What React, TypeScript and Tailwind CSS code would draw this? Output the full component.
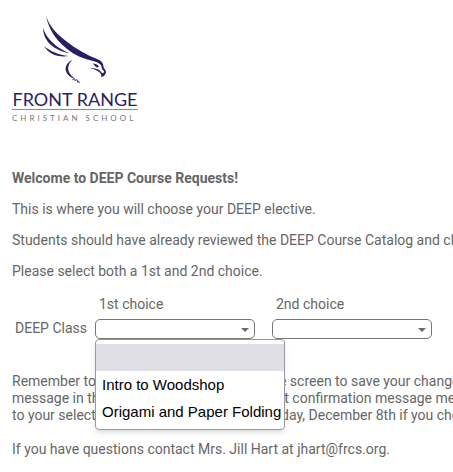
import React from "react";

const options = ["", "Intro to Woodshop", "Origami and Paper Folding"];

function Logo() {
  return (
    <header className="flex w-[126px] flex-col">
      <svg viewBox="35 10 75 80" className="ml-[23px] h-20 w-[75px]" fill="#2b1d63" role="img" aria-label="Falcon">
        <path d="M46 15.5C49 26 56.5 34 66 41C76 49 87 55 97 59C101.5 60.5 103.5 63.5 103.5 67C104 69 105.8 69.6 106 72C106 74.5 104 76 101.8 77.3C100.8 76 101.5 75 101 74C99 71 95 69.3 90.5 68.4C95.5 68.1 99.5 69.5 101.5 72.5C102.5 74 104.2 73 104 71.3C103.5 70.2 102 70 101.8 68C101.6 64.5 98.5 62.5 94 61.3C84 59 75 55.5 66.5 48.5C55.5 39.5 48.5 29 46 15.5Z" />
        <path d="M43 28C46.5 39 56 47.5 69.5 53.3C55.5 50.5 43.5 42.5 43 28Z" />
        <path d="M44 46C50 51.3 58.5 54.6 68.5 56.1C58 57.8 48.5 53.8 44 46Z" />
        <path d="M72.2 60C67.5 64.5 67 70 70.5 74.5C72 76.6 73.8 77.8 75.5 79C71 78 66.8 74.5 65.8 70.5C65 66.5 67.5 62 72.2 60Z" />
        <path d="M93 63.3C95 63.8 97.5 64.5 98.8 66.2L97.8 67.6C96 67.3 94.5 66 93 63.3Z" />
        <path d="M72.3 79.8C74 78.2 75.5 79 75 80.7M75.3 80.8C76.7 79 78 79.8 77.5 81.8M77.4 82.4C78.6 80.7 79.8 81.5 79 83" fill="none" stroke="#2b1d63" strokeWidth="1" />
      </svg>
      <div className="border-b border-[#8c8c94] pb-px text-center font-['Lato',sans-serif] text-[18px] leading-[18px] whitespace-nowrap text-[#2b1d63]">
        FRONT RANGE
      </div>
      <div className="pt-0.5 font-['Lato',sans-serif] text-[8px] leading-3 tracking-[3px] whitespace-nowrap text-[#77777b]">
        CHRISTIAN SCHOOL
      </div>
    </header>
  );
}

function Choice({ id, label, open = false }: { id: string; label: string; open?: boolean }) {
  return (
    <div className="w-40">
      <label htmlFor={id} className="block pb-1.5 pl-1">
        {label}
      </label>
      <div className="relative">
        <select
          id={id}
          className="block h-5 w-full appearance-none rounded-[5px] border border-[#76767a] bg-white px-1 font-['Liberation_Sans',sans-serif] text-[15px] text-black"
        >
          {options.map((o) => (
            <option key={o}>{o}</option>
          ))}
        </select>
        <svg viewBox="0 0 8 4" className="pointer-events-none absolute top-[9px] right-1.5 h-1 w-2" fill="#6b6b6b" aria-hidden="true">
          <path d="M0 0H8L4 4Z" />
        </svg>
        {open && (
          <ul
            role="listbox"
            aria-label={label}
            className="absolute top-full left-0 z-10 w-[190px] rounded-[4px] border border-[#9a9a9e] bg-white py-1 font-['Liberation_Sans',sans-serif] text-[15px] leading-[27px] whitespace-nowrap text-black shadow-md"
          >
            {options.map((o, i) => (
              <li key={o} role="option" aria-selected={i === 0} className="h-[27px] px-1.5 aria-selected:bg-[#e0dfe6]">
                {o}
              </li>
            ))}
          </ul>
        )}
      </div>
    </div>
  );
}

export default function App() {
  return (
    <main className="overflow-hidden bg-white px-3 pt-2.5 pb-3.5 font-['Roboto',sans-serif] text-[14px] leading-[17px] whitespace-nowrap text-[#666666]">
      <Logo />
      <section className="flex flex-col gap-3.5 pt-[46px]">
        <p className="font-bold">Welcome to DEEP Course Requests!</p>
        <p>This is where you will choose your DEEP elective.</p>
        <p>Students should have already reviewed the DEEP Course Catalog and chosen their electives.</p>
        <p>Please select both a 1st and 2nd choice.</p>
      </section>
      <form className="flex items-end pt-4 pl-[3px]">
        <span className="w-20 pb-0.5">DEEP Class</span>
        <div className="flex gap-[17px]">
          <Choice id="first" label="1st choice" open />
          <Choice id="second" label="2nd choice" />
        </div>
      </form>
      <section className="flex flex-col gap-[17px] pt-[34px]">
        <p>
          Remember to click Submit on the foot of the screen to save your changes.
          <br />
          message in the page below. If you do not get confirmation message means
          <br />
          to your selections before the close of Thursday, December 8th if you choose
        </p>
        <p>If you have questions contact Mrs. Jill Hart at jhart@frcs.org.</p>
      </section>
    </main>
  );
}
